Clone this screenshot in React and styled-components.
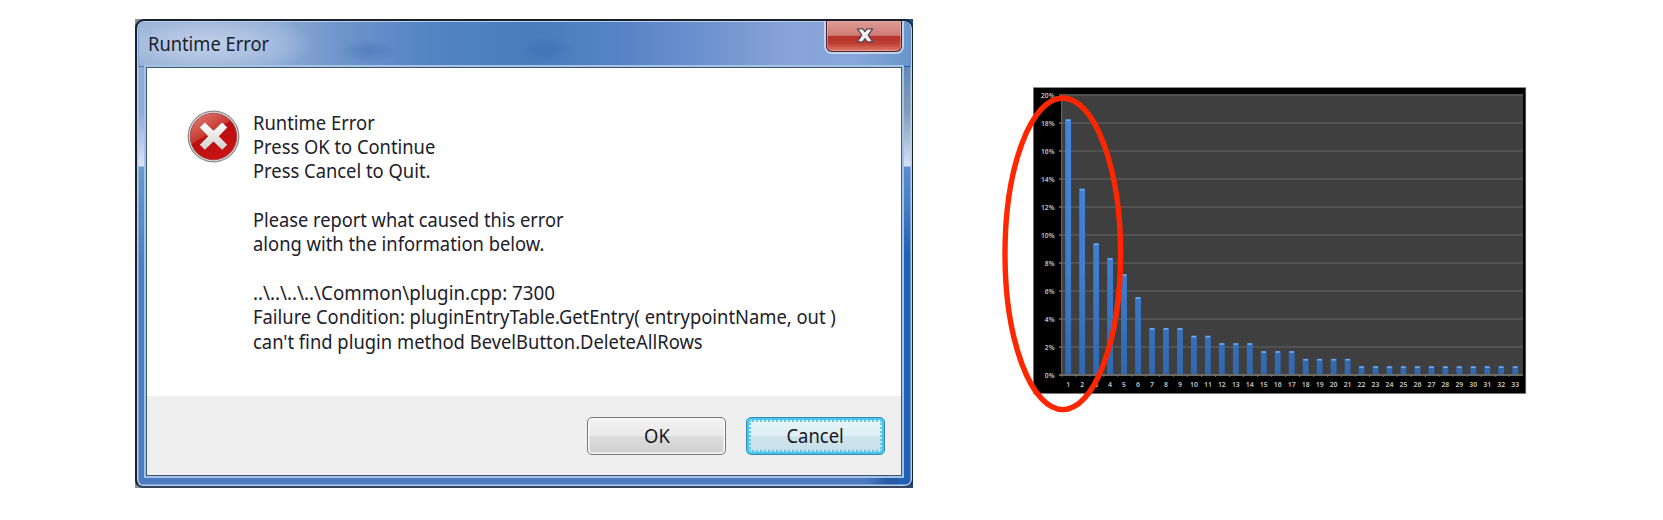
import React from "react";
import styled, { createGlobalStyle, css } from "styled-components";

const Global = createGlobalStyle`
  body { margin: 0; background: #fff; }
  * { box-sizing: border-box; }
`;

const Page = styled.main`
  width: 1663px;
  height: 520px;
  display: flex;
  align-items: flex-start;
  padding: 19px 0 0 135px;
  overflow: hidden;
  background: #fff;
  font-family: "Noto Sans", "Open Sans", sans-serif;
`;

const Backdrop = styled.div`
  flex: none;
  width: 778px;
  height: 469px;
  background: linear-gradient(90deg, #8d8f92 0 50%, #1d4a86 50%);
`;

const Frame = styled.section`
  height: 469px;
  border: 2px solid #18202c;
  border-width: 2px 1px 2px 2px;
  border-bottom-color: #34435e;
  border-radius: 9px 9px 8px 8px;
  overflow: hidden;
  box-shadow: inset 0 0 0 1.5px #b9d0ea;
  background:
    linear-gradient(180deg, transparent 0 46px, #8fa9d8 46px, #90a9dd 90px, #d9e5f5 145px, #6b98cf 146px, #5f90ca 180px, #4d7bc2 250px) 0 0 / 14px 100% no-repeat,
    linear-gradient(180deg, transparent 0 46px, #6489b5 46px, #8299b9 90px, #d3e2f7 145px, #588ad0 146px, #4a80c8 180px, #2261b3 230px) 100% 0 / 14px 100% no-repeat,
    linear-gradient(90deg, #4d7bc2 0 94%, #2559a4 97%);
  display: flex;
  flex-direction: column;
  padding: 1px 1px 0;
`;

const TitleBar = styled.header`
  flex: none;
  height: 44px;
  margin: 0 1px;
  display: flex;
  justify-content: space-between;
  align-items: flex-start;
  padding: 0 8px 0 9px;
  background:
    radial-gradient(ellipse 110px 34px at 66px 22px, rgba(212, 223, 241, 0.7), rgba(205, 218, 238, 0.5) 45%, rgba(205, 218, 238, 0)),
    radial-gradient(ellipse 30px 12px at 229px 29px, rgba(54, 103, 174, 0.4), rgba(54, 103, 174, 0)),
    radial-gradient(ellipse 28px 14px at 408px 28px, rgba(48, 98, 172, 0.4), rgba(48, 98, 172, 0)),
    linear-gradient(90deg, #90abd4 0, #8eaad5 18%, #6f95cb 26%, #5283c3 38%, #487dbd 51%, #5582c6 62%, #6d91ce 73%, #88a3da 84%, #86a6d8 93%, #6996cc 100%);
`;

const Fit = styled.span`
  display: inline-block;
  white-space: pre;
  transform-origin: ${(p) => p.$origin || "left"} center;
  transform: scaleX(${(p) => p.$x});
`;

const Title = styled.h1`
  margin: 6px 0 0;
  font-size: 20px;
  line-height: 32px;
  font-weight: 400;
  color: #1b1f2c;
`;

const CloseButton = styled.button`
  width: 76px;
  height: 31px;
  margin-top: -1px;
  padding: 0 0 2px 2px;
  display: flex;
  align-items: center;
  justify-content: center;
  border: 1.5px solid #4d2530;
  border-top: 0;
  border-radius: 0 0 6px 6px;
  background: linear-gradient(180deg, #dc9c94 0, #cf7c76 48%, #b7322b 50%, #bf3f34 75%, #dd7a68 100%);
  box-shadow: 0 0 0 2px rgba(205, 221, 243, 0.85), inset 0 0 0 1px rgba(240, 180, 170, 0.55);
`;

const Client = styled.div`
  flex: 1;
  margin: 1px 9px 10px 8px;
  border: 1.5px solid #3e556f;
  box-shadow: 0 0 0 2px #a5c4e4;
  background: #fff;
  display: flex;
  flex-direction: column;
`;

const Message = styled.div`
  flex: 1;
  display: flex;
  align-items: flex-start;
  gap: 13px;
  padding: 42px 0 0 40px;
`;

const Lines = styled.div`
  font-size: 20px;
  line-height: 24.4px;
  color: #20202a;
  margin-top: 0.5px;
`;

const Line = styled.div`
  height: 24.35px;
`;

const Footer = styled.footer`
  flex: none;
  height: 79px;
  background: #efefef;
  display: flex;
  justify-content: flex-end;
  gap: 20px;
  padding: 21px 16px 0 0;
`;

const Button = styled.button`
  width: 139px;
  height: 38px;
  padding: 0;
  border-radius: 5px;
  border: 1.5px solid #777;
  font: 400 20px/34px "Noto Sans", "Open Sans", sans-serif;
  color: #171722;
  background: linear-gradient(180deg, #f2f2f2 0, #eaeaea 49%, #dddddd 51%, #cfcfcf 100%);
  box-shadow: inset 0 0 0 1.5px #fafafa;
  ${(p) =>
    p.$focused &&
    css`
      border-color: #3c89ae;
      background: linear-gradient(180deg, #eaf5f9 0, #deeff5 49%, #cfe4ec 51%, #c6dfe8 100%);
      box-shadow: inset 0 0 0 2px #47c5ea;
      outline: 2px dotted #58cdea;
      outline-offset: -5px;
    `}
`;

const Chart = styled.svg`
  flex: none;
  display: block;
  width: 540px;
  height: 340px;
  margin: 61px 0 0 82px;
`;

const messages = [
  ["Runtime Error", 0.92],
  ["Press OK to Continue", 0.917],
  ["Press Cancel to Quit.", 0.918],
  ["", 1],
  ["Please report what caused this error", 0.912],
  ["along with the information below.", 0.918],
  ["", 1],
  ["..\\..\\..\\..\\Common\\plugin.cpp: 7300", 0.937],
  ["Failure Condition: pluginEntryTable.GetEntry( entrypointName, out )", 0.918],
  ["can't find plugin method BevelButton.DeleteAllRows", 0.919],
];

const values = [
  18.25, 13.3, 9.4, 8.35, 7.2, 5.55, 3.35, 3.35, 3.35, 2.8, 2.8, 2.27, 2.27, 2.27,
  1.7, 1.7, 1.7, 1.15, 1.15, 1.15, 1.15, ...Array(12).fill(0.62),
];
const ticks = [0, 2, 4, 6, 8, 10, 12, 14, 16, 18, 20];
const LEFT = 1061.5;
const BOTTOM = 375;
const STEP = 13.97;

function ErrorIcon() {
  return (
    <svg width="53" height="53" viewBox="0 0 53 53">
      <defs>
        <linearGradient id="red" x1="0" y1="0" x2="0.6" y2="1">
          <stop offset="0" stopColor="#e2857c" />
          <stop offset="0.48" stopColor="#c93a33" />
          <stop offset="0.52" stopColor="#b90f10" />
          <stop offset="1" stopColor="#c81212" />
        </linearGradient>
        <linearGradient id="cross" x1="0" y1="0" x2="0" y2="1">
          <stop offset="0" stopColor="#fff" />
          <stop offset="1" stopColor="#d4d0d0" />
        </linearGradient>
      </defs>
      <circle cx="26.5" cy="26.5" r="25.3" fill="#dedede" stroke="#8d8d8d" strokeWidth="1.3" />
      <circle cx="26.5" cy="26.5" r="23.3" fill="url(#red)" stroke="#a33a38" strokeWidth="0.8" />
      <path
        d="M17.8 12.4 L26.5 20.8 L35.2 12.4 L40.2 17.4 L31.8 26.2 L40.2 34.8 L35.2 39.8 L26.5 31.4 L17.8 39.8 L12.8 34.8 L21.2 26.2 L12.8 17.4 Z"
        fill="url(#cross)"
      />
    </svg>
  );
}

function CloseGlyph() {
  return (
    <svg width="18" height="17" viewBox="0 0 18 17">
      <path
        d="M1.4 1.8 H6.9 L9 4.6 L11.1 1.8 H16.6 L12.2 8.2 L16.8 14.8 H11.3 L9 11.7 L6.7 14.8 H1.2 L5.8 8.2 Z"
        fill="#f3f3f5"
        stroke="#5b4550"
        strokeWidth="1.3"
        strokeLinejoin="round"
      />
    </svg>
  );
}

function BarChart() {
  return (
    <Chart viewBox="995 80 540 340">
      <defs>
        <linearGradient id="bar" gradientUnits="userSpaceOnUse" x1="0" y1="120" x2="0" y2="375">
          <stop offset="0" stopColor="#4385d8" />
          <stop offset="0.6" stopColor="#3f7dcd" />
          <stop offset="1" stopColor="#3068b0" />
        </linearGradient>
      </defs>
      <rect x="1033.4" y="87.7" width="492.4" height="305.8" fill="#000" stroke="#777" strokeWidth="0.6" />
      <rect x="1061.5" y="95" width="461.5" height="280" fill="#3f3f3f" />
      {ticks.map((t) => (
        <g key={t}>
          <rect x="1059" y={BOTTOM - t * 14 - 1} width="464" height="2" fill={t === 0 ? "#6a6a6a" : "#525252"} />
          <text x="1054.5" y={BOTTOM - t * 14 + 2.7} textAnchor="end" fontSize="6.7" fontWeight="600" fill="#c4c4c4">
            {t}%
          </text>
        </g>
      ))}
      <rect x="1061" y="95" width="1.2" height="280" fill="#636363" />
      {values.map((v, i) => {
        const cx = LEFT + STEP * (i + 0.5) - 0.3;
        const top = BOTTOM - v * 14;
        return (
          <g key={i}>
            <rect x={cx - 2.9} y={top} width="5.8" height={BOTTOM - 1 - top} fill="url(#bar)" />
            <rect x={cx - 2.3} y={top} width="4.6" height="1.6" fill="#69aaf0" />
            <rect x={LEFT + STEP * i} y="375" width="0.8" height="2" fill="#777" />
            <text x={cx} y="387.3" textAnchor="middle" fontSize="6.9" fontWeight="600" fill="#c4c4c4">
              {i + 1}
            </text>
          </g>
        );
      })}
      <ellipse cx="1062.8" cy="253.8" rx="57.8" ry="155.8" fill="none" stroke="#ff2600" strokeWidth="5.4" />
    </Chart>
  );
}

export default function App() {
  return (
    <Page>
      <Global />
      <Backdrop>
        <Frame>
          <TitleBar>
            <Title>
              <Fit $x={0.915}>Runtime Error</Fit>
            </Title>
            <CloseButton aria-label="Close">
              <CloseGlyph />
            </CloseButton>
          </TitleBar>
          <Client>
            <Message>
              <ErrorIcon />
              <Lines>
                {messages.map(([text, x], i) => (
                  <Line key={i}>
                    <Fit $x={x}>{text}</Fit>
                  </Line>
                ))}
              </Lines>
            </Message>
            <Footer>
              <Button>
                <Fit $x={0.92} $origin="center">OK</Fit>
              </Button>
              <Button $focused>
                <Fit $x={0.92} $origin="center">Cancel</Fit>
              </Button>
            </Footer>
          </Client>
        </Frame>
      </Backdrop>
      <BarChart />
    </Page>
  );
}
